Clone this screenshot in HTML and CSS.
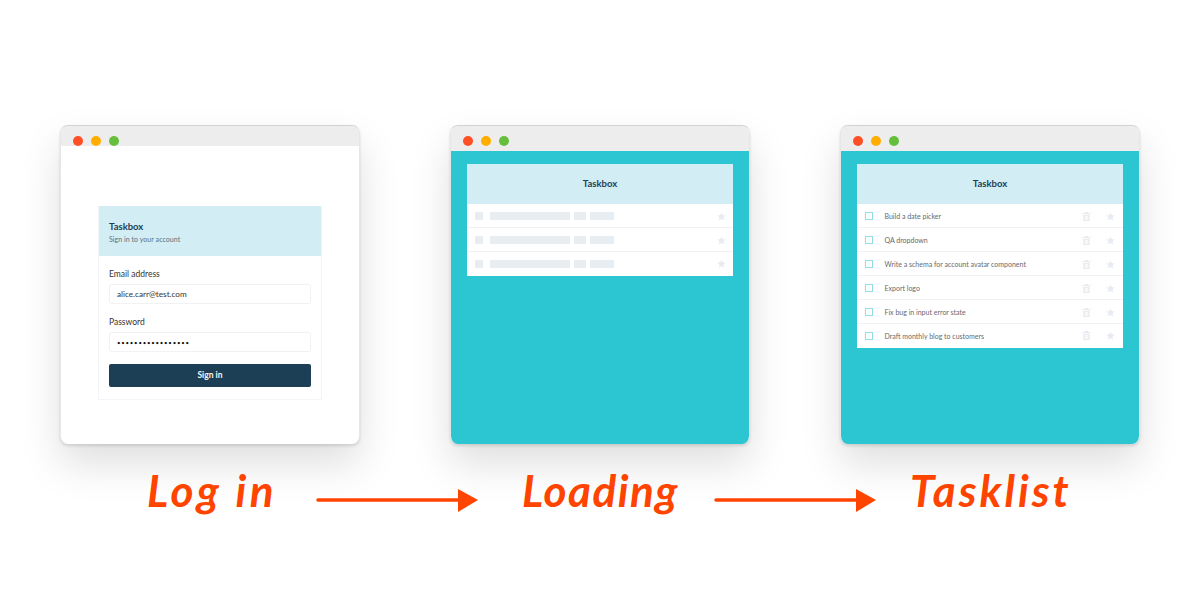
FILE: index.html
```html
<!DOCTYPE html>
<html lang="en">
<head>
  <meta charset="UTF-8">
  <title>Taskbox flow</title>
  <link rel="stylesheet" href="styles.css">
</head>
<body>

  <svg class="icon-defs" width="0" height="0">
    <symbol id="star" viewBox="0 0 24 24">
      <path d="M12 1l3.300 7.400 8 .8-6 5.400 1.700 7.900-7-4.100-7 4.100 1.700-7.900-6-5.400 8-.8z"/>
    </symbol>
    <symbol id="trash" viewBox="0 0 24 24">
      <path d="M8.500 0h7v2.500H23v3H1v-3h7.500zM3.500 7h17v17h-17zM7.500 10v11h2V10zm3.500 0v11h2V10zm3.500 0v11h2V10z" fill-rule="evenodd"/>
    </symbol>
  </svg>

  <div class="windows">

    <div class="window">
      <div class="titlebar titlebar-short">
        <span class="dot dot-red"></span>
        <span class="dot dot-amber"></span>
        <span class="dot dot-green"></span>
      </div>
      <div class="screen screen-login">
        <div class="login-card">
          <div class="login-head">
            <div class="brand">Taskbox</div>
            <div class="brand-sub">Sign in to your account</div>
          </div>
          <form class="login-form">
            <label class="field-label" for="email">Email address</label>
            <input class="field" id="email" type="text" value="alice.carr@test.com">
            <label class="field-label" for="password">Password</label>
            <input class="field field-pass" id="password" type="password" value="xxxxxxxxxxxxxxxxx">
            <button class="signin" type="button">Sign in</button>
          </form>
        </div>
      </div>
    </div>

    <div class="window">
      <div class="titlebar">
        <span class="dot dot-red"></span>
        <span class="dot dot-amber"></span>
        <span class="dot dot-green"></span>
      </div>
      <div class="screen screen-teal">
        <div class="panel">
          <div class="panel-head">Taskbox</div>
          <div class="row">
            <span class="skel skel-box"></span>
            <span class="skel skel-long"></span>
            <span class="skel skel-short"></span>
            <span class="skel skel-mid"></span>
            <svg class="icon icon-star-load"><use href="#star"/></svg>
          </div>
          <div class="row">
            <span class="skel skel-box"></span>
            <span class="skel skel-long"></span>
            <span class="skel skel-short"></span>
            <span class="skel skel-mid"></span>
            <svg class="icon icon-star-load"><use href="#star"/></svg>
          </div>
          <div class="row">
            <span class="skel skel-box"></span>
            <span class="skel skel-long"></span>
            <span class="skel skel-short"></span>
            <span class="skel skel-mid"></span>
            <svg class="icon icon-star-load"><use href="#star"/></svg>
          </div>
        </div>
      </div>
    </div>

    <div class="window">
      <div class="titlebar">
        <span class="dot dot-red"></span>
        <span class="dot dot-amber"></span>
        <span class="dot dot-green"></span>
      </div>
      <div class="screen screen-teal">
        <div class="panel">
          <div class="panel-head">Taskbox</div>
          <div class="row">
            <span class="check"></span>
            <span class="task-title">Build a date picker</span>
            <svg class="icon icon-trash"><use href="#trash"/></svg>
            <svg class="icon icon-star"><use href="#star"/></svg>
          </div>
          <div class="row">
            <span class="check"></span>
            <span class="task-title">QA dropdown</span>
            <svg class="icon icon-trash"><use href="#trash"/></svg>
            <svg class="icon icon-star"><use href="#star"/></svg>
          </div>
          <div class="row">
            <span class="check"></span>
            <span class="task-title">Write a schema for account avatar component</span>
            <svg class="icon icon-trash"><use href="#trash"/></svg>
            <svg class="icon icon-star"><use href="#star"/></svg>
          </div>
          <div class="row">
            <span class="check"></span>
            <span class="task-title">Export logo</span>
            <svg class="icon icon-trash"><use href="#trash"/></svg>
            <svg class="icon icon-star"><use href="#star"/></svg>
          </div>
          <div class="row">
            <span class="check"></span>
            <span class="task-title">Fix bug in input error state</span>
            <svg class="icon icon-trash"><use href="#trash"/></svg>
            <svg class="icon icon-star"><use href="#star"/></svg>
          </div>
          <div class="row">
            <span class="check"></span>
            <span class="task-title">Draft monthly blog to customers</span>
            <svg class="icon icon-trash"><use href="#trash"/></svg>
            <svg class="icon icon-star"><use href="#star"/></svg>
          </div>
        </div>
      </div>
    </div>

  </div>

  <div class="captions">
    <span class="caption caption-login">Log in</span>
    <svg class="arrow arrow-first" viewBox="0 0 162 24">
      <path d="M2 12H144" stroke="#ff4400" stroke-width="3.500" stroke-linecap="round"/>
      <path d="M142 1l20 11-20 12z" fill="#ff4400"/>
    </svg>
    <span class="caption caption-loading">Loading</span>
    <svg class="arrow arrow-second" viewBox="0 0 162 24">
      <path d="M2 12H144" stroke="#ff4400" stroke-width="3.500" stroke-linecap="round"/>
      <path d="M142 1l20 11-20 12z" fill="#ff4400"/>
    </svg>
    <span class="caption caption-tasklist">Tasklist</span>
  </div>

</body>
</html>
```

FILE: styles.css
```css
body {
  font-family: Lato, "Open Sans", sans-serif;
  background-color: #fff;
  margin: 0;
  height: 600px;
  overflow: hidden;
}

.icon-defs {
  display: block;
  height: 0;
}

.windows {
  display: flex;
  justify-content: center;
  gap: 90px;
  padding-top: 125px;
}

.window {
  width: 300px;
  height: 319px;
  box-sizing: border-box;
  border: 1px solid #e6e6e6;
  border-top-color: #d2d2d2;
  border-bottom: none;
  border-radius: 8px;
  background-color: #fff;
  box-shadow: 0 2px 3px rgba(0, 0, 0, 0.12), 0 20px 40px rgba(0, 0, 0, 0.13);
  display: flex;
  flex-direction: column;
  overflow: hidden;
}

.titlebar {
  height: 25px;
  flex-shrink: 0;
  box-sizing: border-box;
  background-color: #ededed;
  display: flex;
  gap: 8px;
  padding: 10px 0 0 12px;
}

.titlebar-short {
  height: 20px;
}

.dot {
  width: 10px;
  height: 10px;
  border-radius: 50%;
}

.dot-red {
  background-color: #ff4f26;
}

.dot-amber {
  background-color: #ffae00;
}

.dot-green {
  background-color: #66bf3c;
}

.screen {
  flex: 1;
}

.screen-login {
  padding: 60px 37px 0;
}

.screen-teal {
  background-color: #2cc5d2;
  padding: 13px 16px 0;
}

/* login card */
.login-card {
  border: 1px solid #f2f4f8;
  border-top: none;
  height: 193px;
}

.login-head {
  height: 50px;
  box-sizing: border-box;
  background-color: #d3edf4;
  padding: 15px 10px 0;
}

.brand {
  font-size: 9.500px;
  font-weight: 700;
  line-height: 12px;
  color: #1d3f55;
}

.brand-sub {
  font-size: 7px;
  line-height: 9px;
  margin-top: 2px;
  color: #5c6f7c;
  letter-spacing: 0.05px;
}

.login-form {
  padding: 12px 10px 0;
  display: flex;
  flex-direction: column;
}

.field-label {
  font-size: 8.500px;
  line-height: 12px;
  color: #333;
  margin-bottom: 4px;
}

.field {
  height: 20px;
  box-sizing: border-box;
  border: 1px solid #f0f2f6;
  border-radius: 2px;
  padding: 0 7px;
  margin: 0 0 12px;
  font-family: inherit;
  font-size: 8.200px;
  color: #333;
  outline: none;
}

.field-pass {
  font-size: 6px;
  letter-spacing: 0.8px;
  color: #111;
  margin-bottom: 11.500px;
}

.signin {
  height: 23.500px;
  border: none;
  border-radius: 2px;
  background-color: #1d3f55;
  color: #f4f6f8;
  font-family: inherit;
  font-size: 8.500px;
  font-weight: 700;
}

/* task panel */
.panel {
  background-color: #fff;
}

.panel-head {
  height: 40px;
  background-color: #d3edf4;
  color: #1d3f55;
  font-size: 9.500px;
  font-weight: 700;
  line-height: 40px;
  text-align: center;
}

.row {
  height: 24px;
  box-sizing: border-box;
  display: flex;
  align-items: center;
  padding: 1px 8px 0;
  border-bottom: 1px solid #f0f2f5;
}

.row:last-child {
  height: 23.500px;
  border-bottom-color: transparent;
}

.skel {
  height: 8px;
  background-color: #e8edf2;
  border-radius: 1px;
}

.skel-box {
  width: 8px;
  margin-right: 7px;
}

.skel-long {
  width: 80px;
  margin-right: 4px;
}

.skel-short {
  width: 12px;
  margin-right: 4px;
}

.skel-mid {
  width: 24px;
}

.check {
  width: 6.500px;
  height: 6.500px;
  border: 1px solid #91dfe6;
  flex-shrink: 0;
  margin-left: -0.5px;
  margin-right: 11.500px;
}

.task-title {
  flex: 1;
  font-size: 7px;
  color: #666a70;
}

.icon {
  fill: #e6ebf1;
  flex-shrink: 0;
}

.icon-star-load {
  width: 9px;
  height: 9px;
  margin-left: auto;
  margin-right: -1px;
}

.icon-trash {
  width: 9px;
  height: 9px;
  margin-right: 15px;
}

.icon-star {
  width: 9px;
  height: 9px;
  margin-right: 0.5px;
}

/* bottom captions */
.captions {
  display: flex;
  align-items: center;
  height: 55px;
  margin-top: 28px;
  padding-left: 147px;
}

.caption {
  align-self: flex-start;
  font-family: Lato, sans-serif;
  font-size: 44px;
  font-weight: 700;
  font-style: italic;
  line-height: 36px;
  color: #ff4400;
  white-space: nowrap;
  flex-shrink: 0;
}

.caption-login {
  width: 127px;
  letter-spacing: 3.500px;
}

.caption-loading {
  width: 156px;
  letter-spacing: 1.500px;
}

.caption-tasklist {
  width: 158px;
  letter-spacing: 3px;
}

.arrow {
  width: 162px;
  height: 24px;
  flex-shrink: 0;
}

.arrow-first {
  margin: 0 44px 0 42px;
}

.arrow-second {
  margin: 0 34px 0 36px;
}
```
